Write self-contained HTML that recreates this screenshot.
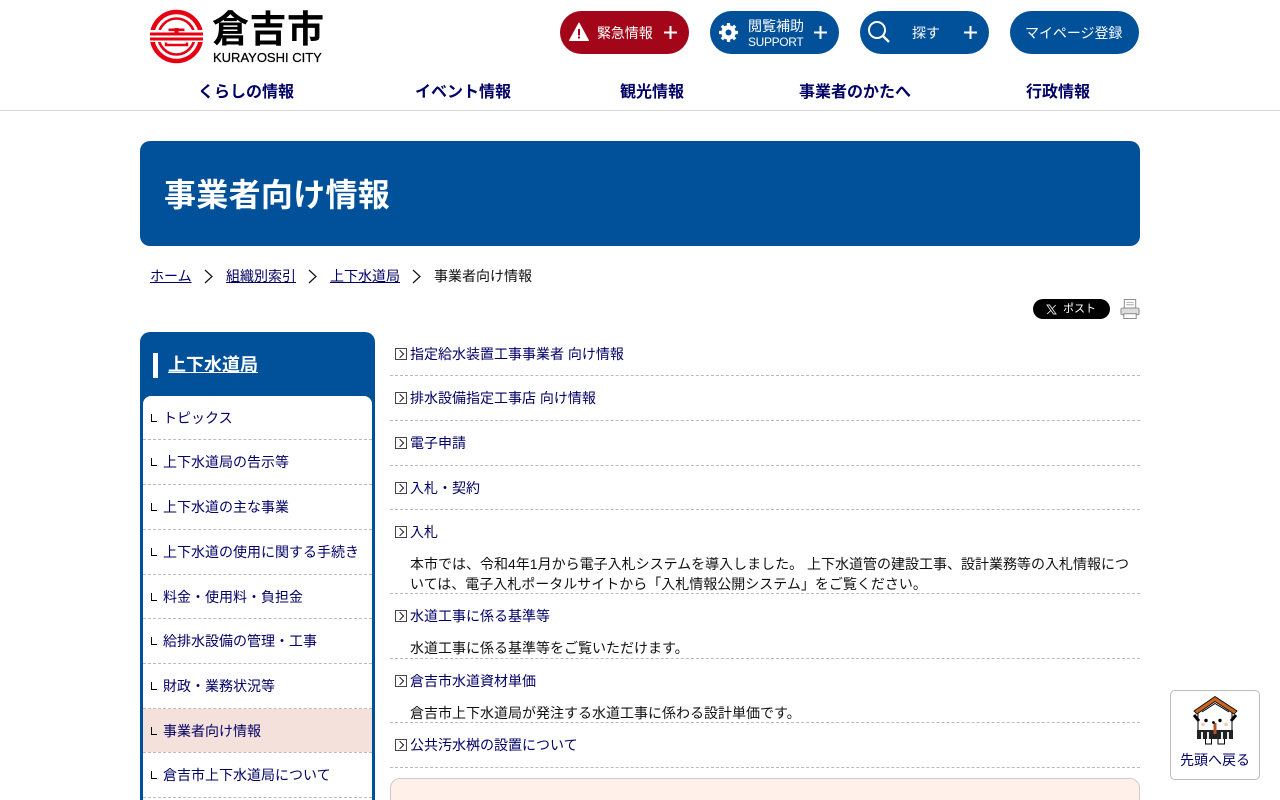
<!DOCTYPE html>
<html lang="ja"><head><meta charset="utf-8"><title>事業者向け情報</title>
<style>
html,body{margin:0;padding:0;width:1280px;height:800px;overflow:hidden}
#w{position:absolute;left:0;top:0;width:1280px;height:800px;overflow:hidden;background:#fff;font-family:"Liberation Sans","Noto Sans CJK JP",sans-serif;font-size:14px;color:#111}
.a{position:absolute;white-space:nowrap}
a{color:#000066;text-decoration:none}
.btn{position:absolute;top:11px;width:129px;height:43px;border-radius:22px;background:#00509a;color:#fff;font-size:14px;line-height:45px}
.btn span{position:absolute;white-space:nowrap}
.btn svg{position:absolute}
.nav{position:absolute;top:82px;font-size:16px;font-weight:bold;color:#000066;line-height:22px;white-space:nowrap}
.bc{position:absolute;top:266px;line-height:20px;white-space:nowrap}
.bc a{text-decoration:underline}
.line{position:absolute;left:390px;width:750px;border-top:1px dashed #bbb;height:0}
.ic{position:absolute;left:395px;width:10px;height:10px;border:1px solid #444;background:#fff}
.ic:after{content:"";position:absolute;left:.5px;top:2px;width:5px;height:5px;border-top:1.5px solid #222;border-right:1.5px solid #222;transform:rotate(45deg)}
.t{position:absolute;left:410px;line-height:20px;white-space:nowrap}
.p{position:absolute;left:410px;width:725px;line-height:20px;color:#111}
.side{position:absolute;left:143px;width:229px;height:44px;line-height:44px}
.sl{position:absolute;left:143px;width:229px;height:0;border-top:1px dashed #bbb}
.side i{position:absolute;left:8px;top:18px;width:5px;height:7px;border-left:1.3px solid #000;border-bottom:1.3px solid #000}
.side a{position:absolute;left:20px;white-space:nowrap}
</style></head><body><div id="w">

<svg class="a" style="left:149px;top:9px" width="56" height="56" viewBox="0 0 56 56">
<circle cx="27.5" cy="27.5" r="24.5" fill="none" stroke="#e60012" stroke-width="4.5"/>
<circle cx="27.5" cy="27.5" r="18" fill="none" stroke="#e60012" stroke-width="2.6"/>
<rect x="0" y="21" width="56" height="12" fill="#fff"/>
<rect x="1" y="23.5" width="53" height="3" fill="#e60012"/>
<rect x="1" y="28.5" width="53" height="3" fill="#e60012"/>
<rect x="25.5" y="19" width="4" height="5" fill="#e60012"/>
<rect x="19.5" y="19.5" width="16" height="2.6" fill="#e60012"/>
<path d="M17 33.5V36H38V33.5" fill="none" stroke="#e60012" stroke-width="2.4"/>
</svg>
<div class="a" style="left:212px;top:6px;font-size:37px;line-height:48px;font-weight:bold;color:#000;letter-spacing:.5px">倉吉市</div>
<div class="a" style="left:213px;top:50px;font-size:13px;line-height:15px;color:#000;-webkit-text-stroke:.25px #000">KURAYOSHI CITY</div>

<div class="btn" style="left:560px;background:#a20618">
<svg style="left:9px;top:11px" width="20" height="20" viewBox="0 0 20 20"><path d="M10 1 L19.5 18.5 H.5Z" fill="#fff" stroke="#fff" stroke-linejoin="round"/><rect x="9" y="7" width="2" height="6.5" fill="#a20618"/><rect x="9" y="14.5" width="2" height="2" fill="#a20618"/></svg>
<span style="left:37px;font-size:14px;letter-spacing:-.1px">緊急情報</span>
<svg style="left:103px;top:14px" width="15" height="15"><path d="M7.5 1V14M1 7.5H14" stroke="#fff" stroke-width="2"/></svg>
</div>

<div class="btn" style="left:710px">
<svg style="left:8px;top:11px" width="21" height="21" viewBox="0 0 21 21"><circle cx="10.5" cy="10.5" r="5.2" fill="none" stroke="#fff" stroke-width="4"/><path d="M10.5 1V20M1 10.5H20M3.8 3.8L17.2 17.2M17.2 3.8L3.8 17.2" stroke="#fff" stroke-width="3.2"/><circle cx="10.5" cy="10.5" r="3" fill="#00509a"/></svg>
<span style="left:38px;top:6px;line-height:18px;font-size:14px">閲覧補助</span>
<span style="left:38px;top:23px;line-height:17px;font-size:12px;letter-spacing:-.35px">SUPPORT</span>
<svg style="left:103px;top:14px" width="15" height="15"><path d="M7.5 1V14M1 7.5H14" stroke="#fff" stroke-width="2"/></svg>
</div>

<div class="btn" style="left:860px">
<svg style="left:7px;top:9px" width="24" height="24" viewBox="0 0 24 24"><circle cx="10" cy="10" r="8" fill="none" stroke="#fff" stroke-width="2"/><path d="M16 16L22 22" stroke="#fff" stroke-width="2.4"/></svg>
<span style="left:52px">探す</span>
<svg style="left:103px;top:14px" width="15" height="15"><path d="M7.5 1V14M1 7.5H14" stroke="#fff" stroke-width="2"/></svg>
</div>

<div class="btn" style="left:1010px"><span style="left:15px;font-size:14px;letter-spacing:-.05px">マイページ登録</span></div>

<div class="nav" style="left:198px">くらしの情報</div>
<div class="nav" style="left:415px">イベント情報</div>
<div class="nav" style="left:620px">観光情報</div>
<div class="nav" style="left:799px">事業者のかたへ</div>
<div class="nav" style="left:1026px">行政情報</div>
<div class="a" style="left:0;top:110px;width:1280px;height:1px;background:#d9d9d9"></div>

<div class="a" style="left:140px;top:141px;width:1000px;height:105px;background:#00509a;border-radius:10px"></div>
<div class="a" style="left:164px;top:172px;font-size:32px;line-height:46px;font-weight:bold;color:#fff;letter-spacing:.3px">事業者向け情報</div>

<div class="bc" style="left:150px"><a href="#">ホーム</a></div>
<svg class="a" style="left:203px;top:269px" width="11" height="15"><path d="M2 1L9 7.5L2 14" fill="none" stroke="#111" stroke-width="1.2"/></svg>
<div class="bc" style="left:226px"><a href="#">組織別索引</a></div>
<svg class="a" style="left:307px;top:269px" width="11" height="15"><path d="M2 1L9 7.5L2 14" fill="none" stroke="#111" stroke-width="1.2"/></svg>
<div class="bc" style="left:330px"><a href="#">上下水道局</a></div>
<svg class="a" style="left:411px;top:269px" width="11" height="15"><path d="M2 1L9 7.5L2 14" fill="none" stroke="#111" stroke-width="1.2"/></svg>
<div class="bc" style="left:434px">事業者向け情報</div>

<div class="a" style="left:1033px;top:299px;width:77px;height:20px;border-radius:10px;background:#000;color:#fff;font-size:11px;line-height:21px">
<svg class="a" style="left:13px;top:5px" width="11" height="11" viewBox="0 0 11 11"><path d="M1 1H3.5L10 10H7.5Z" fill="none" stroke="#ddd" stroke-width=".9"/><path d="M9.7 1L6.2 4.8M4.8 6.4L1.2 10" stroke="#ddd" stroke-width=".9"/></svg>
<span class="a" style="left:30px">ポスト</span></div>
<svg class="a" style="left:1120px;top:299px" width="20" height="20" viewBox="0 0 20 21"><rect x="4" y=".5" width="12" height="9" fill="#fff" stroke="#888"/><path d="M6 3.5H14M6 6H14" stroke="#aaa"/><rect x=".5" y="9.5" width="19" height="7" rx="1.5" fill="#ddd" stroke="#888"/><rect x="3.5" y="15.5" width="13" height="5" fill="#fff" stroke="#888"/></svg>

<!-- sidebar -->
<div class="a" style="left:140px;top:332px;width:235px;height:480px;background:#00509a;border-radius:10px 10px 0 0"></div>
<div class="a" style="left:153px;top:353px;width:5px;height:25px;background:#fff"></div>
<div class="a" style="left:168px;top:352px;font-size:18px;line-height:26px;font-weight:bold;color:#fff;text-decoration:underline">上下水道局</div>
<div class="a" style="left:143px;top:396px;width:229px;height:410px;background:#fff;border-radius:8px 8px 0 0"></div>

<div class="side" style="top:396px"><i></i><a href="#">トピックス</a></div>
<div class="sl" style="top:439px"></div>
<div class="side" style="top:440px"><i></i><a href="#">上下水道局の告示等</a></div>
<div class="sl" style="top:484px"></div>
<div class="side" style="top:485px"><i></i><a href="#">上下水道の主な事業</a></div>
<div class="sl" style="top:529px"></div>
<div class="side" style="top:530px"><i></i><a href="#">上下水道の使用に関する手続き</a></div>
<div class="sl" style="top:574px"></div>
<div class="side" style="top:575px"><i></i><a href="#">料金・使用料・負担金</a></div>
<div class="sl" style="top:618px"></div>
<div class="side" style="top:619px"><i></i><a href="#">給排水設備の管理・工事</a></div>
<div class="sl" style="top:663px"></div>
<div class="side" style="top:664px"><i></i><a href="#">財政・業務状況等</a></div>
<div class="a" style="left:143px;top:709px;width:229px;height:43px;background:#f5e1db"></div>
<div class="sl" style="top:708px"></div>
<div class="side" style="top:709px"><i></i><a href="#">事業者向け情報</a></div>
<div class="sl" style="top:752px"></div>
<div class="side" style="top:753px"><i></i><a href="#">倉吉市上下水道局について</a></div>
<div class="sl" style="top:797px"></div>

<!-- main -->
<div class="ic" style="top:348px"></div><div class="t" style="top:344px"><a href="#">指定給水装置工事事業者 向け情報</a></div>
<div class="line" style="top:375px"></div>
<div class="ic" style="top:392px"></div><div class="t" style="top:388px"><a href="#">排水設備指定工事店 向け情報</a></div>
<div class="line" style="top:420px"></div>
<div class="ic" style="top:437px"></div><div class="t" style="top:433px"><a href="#">電子申請</a></div>
<div class="line" style="top:465px"></div>
<div class="ic" style="top:482px"></div><div class="t" style="top:478px"><a href="#">入札・契約</a></div>
<div class="line" style="top:509px"></div>
<div class="ic" style="top:526px"></div><div class="t" style="top:522px"><a href="#">入札</a></div>
<div class="p" style="top:554px">本市では、令和4年1月から電子入札システムを導入しました。 上下水道管の建設工事、設計業務等の入札情報については、電子入札ポータルサイトから「入札情報公開システム」をご覧ください。</div>
<div class="line" style="top:593px"></div>
<div class="ic" style="top:610px"></div><div class="t" style="top:606px"><a href="#">水道工事に係る基準等</a></div>
<div class="p" style="top:638px">水道工事に係る基準等をご覧いただけます。</div>
<div class="line" style="top:658px"></div>
<div class="ic" style="top:675px"></div><div class="t" style="top:671px"><a href="#">倉吉市水道資材単価</a></div>
<div class="p" style="top:703px">倉吉市上下水道局が発注する水道工事に係わる設計単価です。</div>
<div class="line" style="top:722px"></div>
<div class="ic" style="top:739px"></div><div class="t" style="top:735px"><a href="#">公共汚水桝の設置について</a></div>
<div class="line" style="top:767px"></div>
<div class="a" style="left:390px;top:778px;width:748px;height:40px;background:#fff0ea;border:1px solid #ccc;border-radius:10px"></div>

<!-- back to top -->
<div class="a" style="left:1170px;top:690px;width:88px;height:88px;background:#fff;border:1px solid #bbb;border-radius:5px"></div>
<svg class="a" style="left:1191px;top:695px" width="48" height="52" viewBox="0 0 48 52">
<path d="M7 16L24 6L41 16V36H7Z" fill="#fff" stroke="#000" stroke-width="1"/>
<path d="M11 17L24 8.5L38 17" fill="none" stroke="#000" stroke-width="1"/>
<path d="M3 16L24 1.5L46 16L43 19L24 6.5L6 19Z" fill="#c8641e" stroke="#000" stroke-width=".8"/>
<path d="M3 20L8 26M45 20L40 26" stroke="#000" stroke-width="3"/>
<circle cx="15" cy="25.5" r="1.7" fill="#000"/><circle cx="29" cy="25.5" r="1.7" fill="#000"/>
<circle cx="12" cy="29.5" r="1.8" fill="#f9c8b0"/><circle cx="35" cy="29.5" r="1.8" fill="#f9c8b0"/>
<rect x="6" y="35" width="36" height="9" fill="#222"/>
<path d="M11 37V44M17 37V44M31 37V44M37 37V44" stroke="#fff" stroke-width="1.8"/>
<rect x="22.5" y="28" width="3" height="11" fill="#b5532a"/>
<circle cx="22.5" cy="27.5" r="1.4" fill="#000"/>
<path d="M14.5 44V49H20.5V44M27 44V49H33.5V44" fill="#fff" stroke="#000"/>
</svg>
<div class="a" style="left:1171px;top:750px;width:88px;text-align:center;line-height:20px;color:#000066">先頭へ戻る</div>

</div></body></html>
